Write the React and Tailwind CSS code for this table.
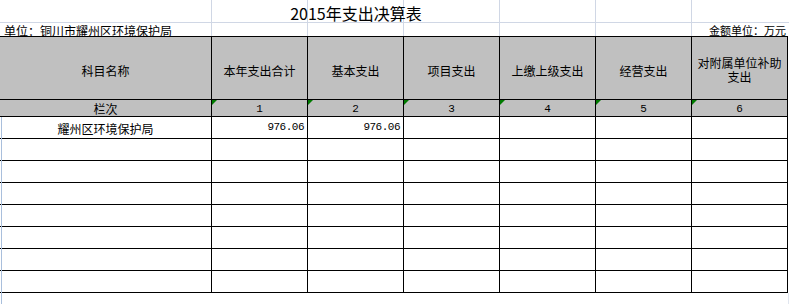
const CJK = { fontFamily: "'Noto Sans CJK SC', 'Noto Sans', sans-serif" };
const MONO = { fontFamily: "'Liberation Mono', 'DejaVu Sans Mono', monospace" };

const HEADERS = ['本年支出合计', '基本支出', '项目支出', '上缴上级支出', '经营支出'];
const NUMS = ['1', '2', '3', '4', '5', '6'];
const ROWS = [
  { name: '耀州区环境保护局', total: '976.06', basic: '976.06' },
  {}, {}, {}, {}, {}, {}, {},
];

function Flag() {
  return (
    <span className="absolute left-0 top-0 w-0 h-0 border-t-[5px] border-r-[5px] border-t-[#007a00] border-r-transparent" />
  );
}

export default function App() {
  return (
    <div className="relative w-[789px] h-[304px] bg-white text-black overflow-hidden" style={CJK}>
      {/* title row */}
      <div className="relative flex h-[23px] border-b border-[#d0d7e5]">
        <div className="w-[212px] border-r border-[#d0d7e5]" />
        {[0, 1, 2, 3, 4].map((i) => (
          <div key={i} className="w-[96px] border-r border-[#d0d7e5]" />
        ))}
        <div className="w-[96px]" />
        <span className="absolute left-[212px] w-[288px] top-[2px] text-center text-[16px] leading-[22px]">
          2015年支出决算表
        </span>
      </div>

      {/* unit row */}
      <div className="flex h-[13px] text-[12px] leading-[13px]">
        <div className="w-[212px] border-r border-[#d0d7e5] pl-[4px] pt-[1px] whitespace-nowrap">
          单位：铜川市耀州区环境保护局
        </div>
        {[0, 1, 2, 3, 4].map((i) => (
          <div key={i} className="w-[96px] border-r border-[#d0d7e5]" />
        ))}
        <div className="w-[96px] text-right pr-[2px] pt-[1px] text-[11px] whitespace-nowrap">金额单位：万元</div>
      </div>

      {/* header */}
      <div className="flex w-[788px] h-[64px] border-t border-b border-black bg-[#c0c0c0] text-[12px] leading-[14px]">
        <div className="w-[212px] border-r border-black flex items-center justify-center pt-[5px]">科目名称</div>
        {HEADERS.map((h) => (
          <div key={h} className="w-[96px] border-r border-black flex items-center justify-center pt-[5px]">
            {h}
          </div>
        ))}
        <div className="w-[96px] border-r border-black flex flex-col items-center justify-center pt-[3px]">
          <span>对附属单位补助</span>
          <span>支出</span>
        </div>
      </div>

      {/* column index row */}
      <div className="flex w-[788px] h-[17px] border-b border-black bg-[#c0c0c0] text-[12px] leading-[16px]">
        <div className="w-[212px] border-r border-black text-center pt-[1px]">栏次</div>
        {NUMS.map((n) => (
          <div
            key={n}
            className="relative w-[96px] border-r border-black text-center pt-[2px] text-[11px] leading-[15px]"
            style={MONO}
          >
            <Flag />
            {n}
          </div>
        ))}
      </div>

      {/* data rows */}
      {ROWS.map((r, i) => (
        <div key={i} className="flex w-[788px] h-[22px] border-b border-black">
          <div className="w-[212px] border-r border-black text-center text-[12px] leading-[21px] pt-[1px]">
            {r.name}
          </div>
          <div
            className="w-[96px] border-r border-black text-right pr-[3px] text-[11px] tracking-[-0.5px] leading-[21px]"
            style={MONO}
          >
            {r.total}
          </div>
          <div
            className="w-[96px] border-r border-black text-right pr-[3px] text-[11px] tracking-[-0.5px] leading-[21px]"
            style={MONO}
          >
            {r.basic}
          </div>
          {[0, 1, 2, 3].map((c) => (
            <div key={c} className="w-[96px] border-r border-black" />
          ))}
        </div>
      ))}

      {/* window edge lines */}
      <div className="absolute left-[1px] top-[117px] bottom-0 w-px bg-[#a9bfdc]" />
      <div className="absolute left-[788px] top-[293px] bottom-0 w-px bg-[#e1e6ef]" />
    </div>
  );
}
